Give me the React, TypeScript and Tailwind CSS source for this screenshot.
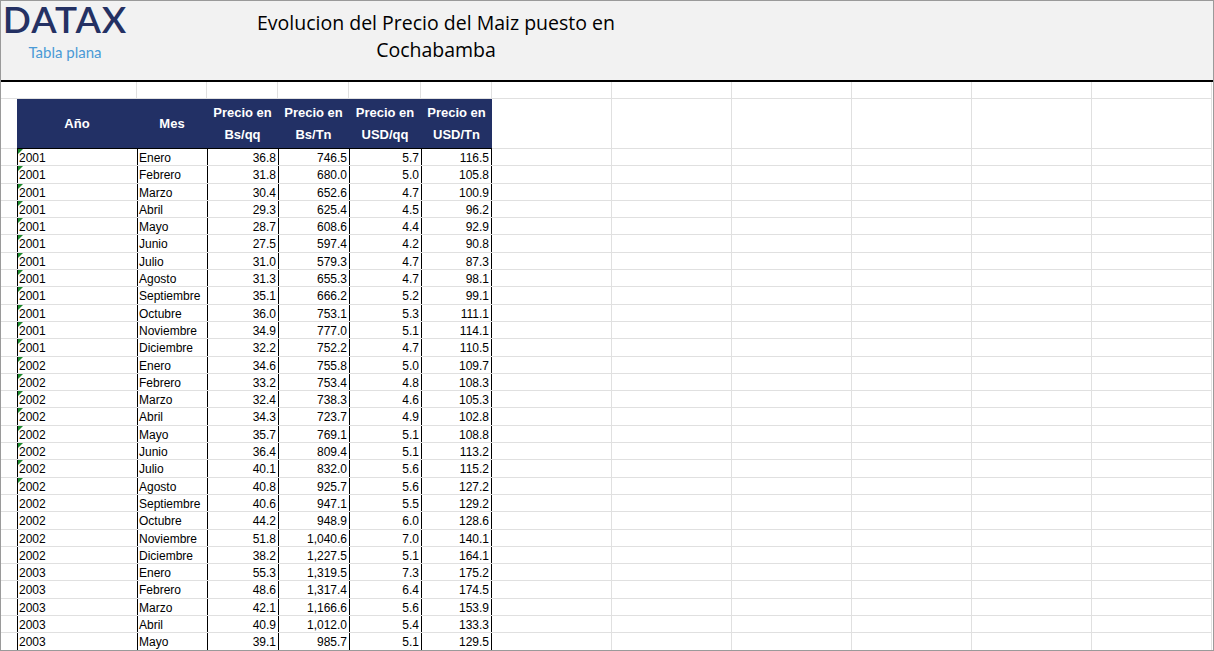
const rows: [string,string,string,string,string,string][] = [
["2001","Enero","36.8","746.5","5.7","116.5"],
["2001","Febrero","31.8","680.0","5.0","105.8"],
["2001","Marzo","30.4","652.6","4.7","100.9"],
["2001","Abril","29.3","625.4","4.5","96.2"],
["2001","Mayo","28.7","608.6","4.4","92.9"],
["2001","Junio","27.5","597.4","4.2","90.8"],
["2001","Julio","31.0","579.3","4.7","87.3"],
["2001","Agosto","31.3","655.3","4.7","98.1"],
["2001","Septiembre","35.1","666.2","5.2","99.1"],
["2001","Octubre","36.0","753.1","5.3","111.1"],
["2001","Noviembre","34.9","777.0","5.1","114.1"],
["2001","Diciembre","32.2","752.2","4.7","110.5"],
["2002","Enero","34.6","755.8","5.0","109.7"],
["2002","Febrero","33.2","753.4","4.8","108.3"],
["2002","Marzo","32.4","738.3","4.6","105.3"],
["2002","Abril","34.3","723.7","4.9","102.8"],
["2002","Mayo","35.7","769.1","5.1","108.8"],
["2002","Junio","36.4","809.4","5.1","113.2"],
["2002","Julio","40.1","832.0","5.6","115.2"],
["2002","Agosto","40.8","925.7","5.6","127.2"],
["2002","Septiembre","40.6","947.1","5.5","129.2"],
["2002","Octubre","44.2","948.9","6.0","128.6"],
["2002","Noviembre","51.8","1,040.6","7.0","140.1"],
["2002","Diciembre","38.2","1,227.5","5.1","164.1"],
["2003","Enero","55.3","1,319.5","7.3","175.2"],
["2003","Febrero","48.6","1,317.4","6.4","174.5"],
["2003","Marzo","42.1","1,166.6","5.6","153.9"],
["2003","Abril","40.9","1,012.0","5.4","133.3"],
["2003","Mayo","39.1","985.7","5.1","129.5"],
];
const extra = [120,120,120,120,120,120];
const font = { fontFamily: '"Liberation Sans", Arial, sans-serif' };

export default function App() {
  return (
    <div className="w-[1214px] h-[651px] overflow-hidden bg-white border border-[#9a9a9a] flex flex-col" style={font}>
      <div className="h-[81px] shrink-0 bg-[#f2f2f2] border-b-2 border-black flex">
        <div className="w-[140px] flex flex-col items-center pt-[1px]">
          <div className="text-[37px] leading-[34px] font-semibold tracking-[1px] text-[#243163] ml-[-12px]" style={{fontFamily:'Lato, sans-serif'}}>DATAX</div>
          <div className="text-[15px] text-[#4a9ad6] mt-[5px] ml-[-12px]" style={{fontFamily:'Lato, sans-serif'}}>Tabla plana</div>
        </div>
        <div className="w-[450px] ml-[70px] text-center text-[19.5px] leading-[27px] text-black pt-[8px]" style={{fontFamily:'"Open Sans", sans-serif'}}>
          Evolucion del Precio del Maiz puesto en<br/>Cochabamba
        </div>
      </div>
      <div className="flex">
        <div className="w-[16px] shrink-0">
          <div className="h-[17px] border-b border-[#e0e0e0]"/>
          <div className="h-[50px] border-b border-[#e0e0e0]"/>
          {rows.map((_,i)=><div key={i} className="h-[17.3px] border-b border-[#e0e0e0]"/>)}
        </div>
        <div className="w-[475px] shrink-0">
          <div className="h-[17px] flex border-b border-[#e0e0e0]">
            {[120,70,71,71,72,71].map((w,i)=><div key={i} style={{width:w}} className="border-r border-[#e0e0e0]"/>)}
          </div>
          <div className="h-[50px] bg-[#223065] text-white font-bold text-[13px] flex items-center border-b border-black leading-[22px]">
            <div className="w-[120px] text-center">Año</div>
            <div className="w-[70px] text-center">Mes</div>
            <div className="w-[71px] text-center">Precio en<br/>Bs/qq</div>
            <div className="w-[71px] text-center">Precio en<br/>Bs/Tn</div>
            <div className="w-[72px] text-center">Precio en<br/>USD/qq</div>
            <div className="w-[71px] text-center">Precio en<br/>USD/Tn</div>
          </div>
          {rows.map((r,i)=>(
            <div key={i} className="h-[17.3px] flex text-[12px] leading-[18px] text-black border-b border-[#e0e0e0]">
              <div className="w-[120px] relative border-l border-black pl-[1px]">
                {i<20 && <div className="absolute left-0 top-0 w-0 h-0 border-t-[5px] border-t-[#1e8a2e] border-r-[5px] border-r-transparent"/>}
                {r[0]}
              </div>
              <div className="w-[70px] border-l border-black pl-[1px] whitespace-nowrap">{r[1]}</div>
              <div className="w-[71px] border-l border-black text-right pr-[2px]">{r[2]}</div>
              <div className="w-[71px] border-l border-black text-right pr-[2px]">{r[3]}</div>
              <div className="w-[72px] border-l border-black text-right pr-[2px]">{r[4]}</div>
              <div className="w-[71px] border-l border-r border-black text-right pr-[2px]">{r[5]}</div>
            </div>
          ))}
        </div>
        <div className="flex-1 flex">
          {extra.map((w,i)=>(
            <div key={i} style={{width:w}} className="border-r border-[#e0e0e0]">
              <div className="h-[17px] border-b border-[#e0e0e0]"/>
              <div className="h-[50px] border-b border-[#e0e0e0]"/>
              {rows.map((_,j)=><div key={j} className="h-[17.3px] border-b border-[#e0e0e0]"/>)}
            </div>
          ))}
        </div>
      </div>
    </div>
  );
}
